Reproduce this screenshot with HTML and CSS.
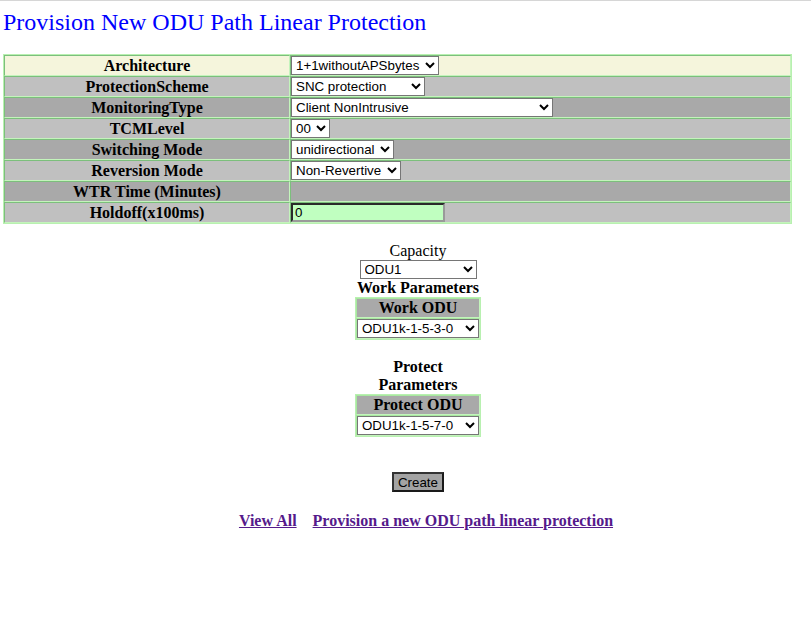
FILE: index.html
```html
<!DOCTYPE html>
<html>
<head>
<meta charset="utf-8">
<title>Provision New ODU Path Linear Protection</title>
<link rel="stylesheet" href="styles.css">
</head>
<body>
<h1 class="title">Provision New ODU Path Linear Protection</h1>
<table class="params">
  <tr class="r-beige"><th>Architecture</th><td><select class="s-arch"><option>1+1withoutAPSbytes</option></select></td></tr>
  <tr class="r-light"><th>ProtectionScheme</th><td><select class="s-scheme"><option>SNC protection</option></select></td></tr>
  <tr class="r-dark"><th>MonitoringType</th><td><select class="s-mon"><option>Client NonIntrusive</option></select></td></tr>
  <tr class="r-light"><th>TCMLevel</th><td><select class="s-tcm"><option>00</option></select></td></tr>
  <tr class="r-dark"><th>Switching Mode</th><td><select class="s-switch"><option>unidirectional</option></select></td></tr>
  <tr class="r-light"><th>Reversion Mode</th><td><select class="s-rev"><option>Non-Revertive</option></select></td></tr>
  <tr class="r-dark"><th>WTR Time (Minutes)</th><td></td></tr>
  <tr class="r-light"><th>Holdoff(x100ms)</th><td><input class="holdoff" type="text" value="0"></td></tr>
</table>

<div class="center">
  <div class="col">
    <div class="cap-label">Capacity</div>
    <select class="s-cap"><option>ODU1</option></select>
    <div class="sub">Work Parameters</div>
    <table class="odu">
      <tr><th>Work ODU</th></tr>
      <tr><td><select class="s-odu"><option>ODU1k-1-5-3-0</option></select></td></tr>
    </table>
    <div class="sub gap">Protect Parameters</div>
    <table class="odu">
      <tr><th>Protect ODU</th></tr>
      <tr><td><select class="s-odu"><option>ODU1k-1-5-7-0</option></select></td></tr>
    </table>
  </div>
  <div class="btn-row"><button class="create" type="button">Create</button></div>
</div>
<div class="links">
  <a href="#" class="lnk">View All</a>
  <a href="#" class="lnk">Provision a new ODU path linear protection</a>
</div>
</body>
</html>
```
FILE: styles.css
```css
html, body {
  margin: 0;
  padding: 0;
}
body {
  border-top: 1px solid #d6d6d6;
  padding: 0 3px;
  background: #ffffff;
  font-family: "Liberation Serif", "Times New Roman", serif;
  font-size: 16px;
  color: #000;
}
.title {
  margin: 7px 0 18px 0;
  font-family: "Liberation Serif", serif;
  font-size: 24px;
  font-weight: normal;
  line-height: 28px;
  color: #0000ff;
}
.params {
  width: 98%;
  border-collapse: separate;
  border-spacing: 0;
  border: 1px solid #b8f0b0;
}
.params th, .params td {
  height: 19px;
  padding: 0;
  border-style: solid;
  border-width: 1px;
  border-color: #7cbf7c #c4f4bc #c4f4bc #7cbf7c;
  line-height: 19px;
  vertical-align: middle;
}
.params th {
  width: 284px;
  font-size: 16px;
  font-weight: bold;
  text-align: center;
}
.params td {
  text-align: left;
}
.r-beige { background: #f5f5dc; }
.r-light { background: #c0c0c0; }
.r-dark { background: #a9a9a9; }

select {
  display: block;
  box-sizing: border-box;
  height: 19px;
  margin: 0;
  padding: 0;
  font-family: "Liberation Sans", Arial, sans-serif;
  font-size: 13.33px;
  color: #000;
  background: #fff;
  border: 1px solid #767676;
  border-radius: 0;
}
.s-arch { width: 148px; }
.s-scheme { width: 134px; }
.s-mon { width: 262px; }
.s-tcm { width: 39px; }
.s-switch { width: 103px; }
.s-rev { width: 110px; }
.holdoff {
  display: block;
  box-sizing: border-box;
  width: 154px;
  height: 19px;
  margin: 0;
  padding: 0 2px;
  font-family: "Liberation Sans", Arial, sans-serif;
  font-size: 13.33px;
  background: #c0ffc0;
  border-style: solid;
  border-width: 2px;
  border-color: #2a2a2a #9a9a9a #9a9a9a #2a2a2a;
}

.center {
  margin-top: 18px;
  padding-left: 25px;
}
.col {
  width: 126px;
  margin: 0 auto;
  text-align: center;
}
.cap-label {
  line-height: 18px;
}
.s-cap {
  width: 117px;
  margin: 0 auto;
}
.sub {
  font-weight: bold;
  line-height: 18px;
}
.sub.gap {
  margin-top: 18px;
}
.odu {
  width: 126px;
  border-collapse: separate;
  border-spacing: 0;
  border: 1px solid #b8f0b0;
}
.odu th, .odu td {
  padding: 0;
  border-style: solid;
  border-width: 1px;
  border-color: #a8e8a0 #c4f4bc #c4f4bc #a8e8a0;
}
.odu th {
  height: 18px;
  line-height: 18px;
  background: #a9a9a9;
  font-weight: bold;
}
.odu td {
  height: 19px;
}
.s-odu {
  width: 122px;
}
.btn-row {
  margin-top: 35px;
  text-align: center;
}
.create {
  box-sizing: border-box;
  width: 52px;
  height: 20px;
  padding: 0;
  font-family: "Liberation Sans", Arial, sans-serif;
  font-size: 13.33px;
  color: #000;
  background: #a3a3a3;
  border: 2px solid #1a1a1a;
  border-top-color: #333;
  border-left-color: #333;
}
.links {
  display: flex;
  justify-content: center;
  gap: 16px;
  margin-top: 19px;
  padding-left: 41px;
  line-height: 20px;
}
.lnk {
  color: #551a8b;
  font-weight: bold;
  text-decoration: underline;
}
```
